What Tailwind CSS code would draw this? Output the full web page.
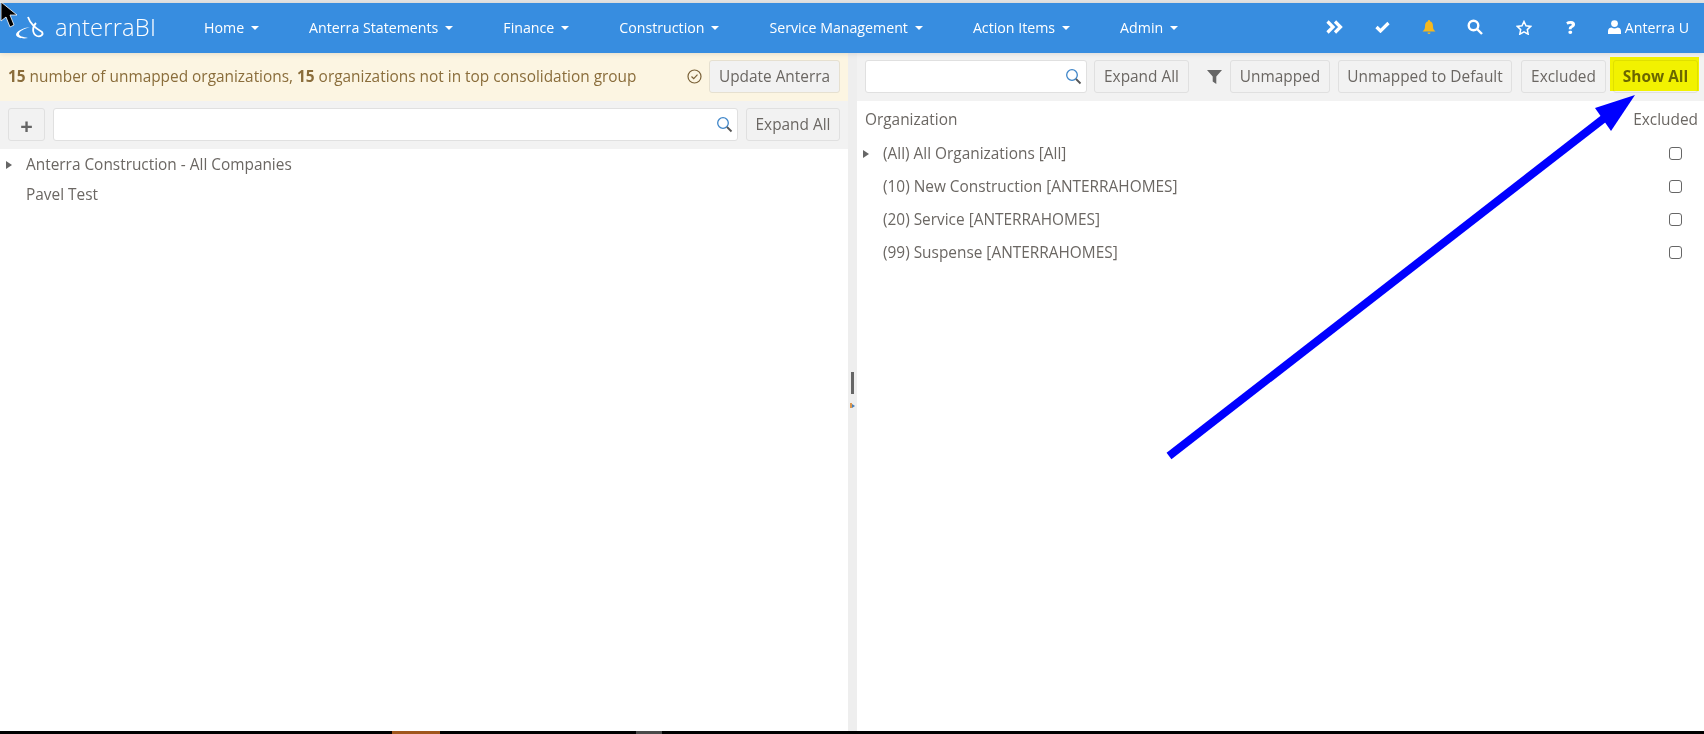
<!DOCTYPE html>
<html lang="en">
<head>
  <meta charset="UTF-8">
  <title>anterraBI</title>
  <script src="https://cdn.jsdelivr.net/npm/@tailwindcss/browser@4"></script>
</head>
<body class="relative w-[1704px] h-[734px] overflow-hidden bg-white font-['Open_Sans',sans-serif] text-[15.4px] text-[#6b6763]">

  <div class="flex flex-col h-full">
    <div class="h-[3px] bg-[#e3e3e3]"></div>

    <!-- Navbar -->
    <nav class="relative z-10 h-[50px] shrink-0 bg-[#378de0] flex items-center text-white pb-[1px] shadow-[0_1px_5px_rgba(0,0,0,0.1)]">
      <div class="w-[204px] shrink-0 flex items-center pl-[15px] gap-[8px]">
        <svg width="32" height="25" viewBox="0 0 32 25" fill="none" stroke="white" stroke-width="1.8">
          <path d="M15 12C8 13 1 16 1 20c1 3 7 4 12 3-5-1-9-2-9-4 0-3 5-5 11-7z" fill="white" stroke="none"/>
          <path d="M13 2c2 6 7 11 14 15 2 3-2 5-5 4-5-2-5-9-1-13"/>
        </svg>
        <span class="text-[23.7px] font-light leading-none tracking-[0.2px]">anterraBI</span>
      </div>
      <div class="flex items-center gap-[50px] text-[14.2px]">
        <span class="flex items-center gap-[7px]">Home <i class="w-0 h-0 mt-[2px] border-x-[4px] border-x-transparent border-t-[4px] border-t-white"></i></span>
        <span class="flex items-center gap-[7px]">Anterra Statements <i class="w-0 h-0 mt-[2px] border-x-[4px] border-x-transparent border-t-[4px] border-t-white"></i></span>
        <span class="flex items-center gap-[7px]">Finance <i class="w-0 h-0 mt-[2px] border-x-[4px] border-x-transparent border-t-[4px] border-t-white"></i></span>
        <span class="flex items-center gap-[7px]">Construction <i class="w-0 h-0 mt-[2px] border-x-[4px] border-x-transparent border-t-[4px] border-t-white"></i></span>
        <span class="flex items-center gap-[7px]">Service Management <i class="w-0 h-0 mt-[2px] border-x-[4px] border-x-transparent border-t-[4px] border-t-white"></i></span>
        <span class="flex items-center gap-[7px]">Action Items <i class="w-0 h-0 mt-[2px] border-x-[4px] border-x-transparent border-t-[4px] border-t-white"></i></span>
        <span class="flex items-center gap-[7px]">Admin <i class="w-0 h-0 mt-[2px] border-x-[4px] border-x-transparent border-t-[4px] border-t-white"></i></span>
      </div>
      <div class="ml-auto flex items-center pr-[15px]">
        <svg class="mr-[32px]" width="17" height="14" viewBox="0 0 17 14" fill="none" stroke="white" stroke-width="3.200"><path d="M1.500 1.500L7 7l-5.500 5.500M9 1.500L14.500 7 9 12.500"/></svg>
        <svg class="mr-[32px]" width="15" height="12" viewBox="0 0 15 12" fill="none" stroke="white" stroke-width="3.200"><path d="M1.500 6l4 4 8-8"/></svg>
        <svg class="mr-[31px]" width="14" height="15" viewBox="0 0 14 15" fill="#f5b81e"><path d="M7 0a1 1 0 0 1 1 1.200C10.500 2 11 4 11 6.500c0 2.500 1 3.500 2.500 5H.5C2 10 3 9 3 6.500 3 4 3.500 2 6 1.200A1 1 0 0 1 7 0zM5.500 12.500h3a1.500 1.500 0 0 1-3 0z"/></svg>
        <svg class="mr-[33px]" width="16" height="16" viewBox="0 0 16 16" fill="none" stroke="white" stroke-width="2.400"><circle cx="6.500" cy="6.500" r="4.800"/><path d="M10 10l5 5"/></svg>
        <svg class="mr-[34px]" width="16" height="15" viewBox="0 0 16 15" fill="none" stroke="white" stroke-width="1.500"><path d="M8 1.500l2 4.300 4.700.6-3.400 3.200.9 4.600L8 11.900l-4.200 2.300.9-4.600L1.300 6.400 6 5.800z"/></svg>
        <span class="mr-[32px] w-[10px] text-[18px] font-extrabold leading-none text-center">?</span>
        <svg class="mr-[4px]" width="13" height="14" viewBox="0 0 13 14" fill="white"><circle cx="6.500" cy="3.600" r="3.400"/><path d="M0 14v-3c0-2.500 2-3.500 3.500-3.500 2 1.300 4 1.300 6 0C11 7.500 13 8.500 13 11v3z"/></svg>
        <span class="text-[14.2px]">Anterra U</span>
      </div>
    </nav>

    <div class="flex flex-1 min-h-0">
      <!-- Left pane -->
      <section class="w-[848px] shrink-0 flex flex-col">
        <div class="h-[48px] shrink-0 bg-[#fcf5e2] flex items-center pl-[8px] pr-[8px] pb-[1px] text-[#8a6d3b]">
          <span><b class="font-bold">15</b> number of unmapped organizations, <b class="font-bold">15</b> organizations not in top consolidation group</span>
          <svg class="ml-auto mr-[7px]" width="15" height="15" viewBox="0 0 15 15" fill="none" stroke="#7a6138" stroke-width="1.200"><circle cx="7.500" cy="7.500" r="6.500"/><path d="M4.500 7.500l2.200 2.200 3.800-4"/></svg>
          <button class="w-[131px] h-[33px] rounded-[3px] border border-[#e6e0d0] bg-[#f2f2f2] text-[#6b6763]">Update Anterra</button>
        </div>
        <div class="h-[48px] shrink-0 bg-[#f2f2f2] flex items-center gap-[8px] pl-[8px] pr-[8px] pb-[1px]">
          <button class="w-[37px] h-[33px] rounded-[3px] border border-[#e0e0e0] bg-[#f2f2f2] text-[22px] font-bold leading-none text-[#666]">+</button>
          <div class="flex-1 h-[33px] rounded-[3px] border border-[#e0e0e0] bg-white flex items-center justify-end pr-[4px]">
            <svg width="17" height="17" viewBox="0 0 17 17" fill="none"><circle cx="7" cy="7" r="5.300" stroke="#3f86c9" stroke-width="1.300"/><path d="M11 11l4.500 4.500" stroke="#555" stroke-width="1.800"/></svg>
          </div>
          <button class="w-[94px] h-[33px] rounded-[3px] border border-[#e0e0e0] bg-[#f2f2f2]">Expand All</button>
        </div>
        <div class="pt-[1px]">
          <div class="h-[30px] flex items-center">
            <i class="ml-[6px] w-0 h-0 border-y-[4px] border-y-transparent border-l-[6px] border-l-[#666]"></i>
            <span class="ml-[14px]">Anterra Construction - All Companies</span>
          </div>
          <div class="h-[30px] flex items-center pl-[26px]">Pavel Test</div>
        </div>
      </section>

      <!-- Splitter -->
      <div class="w-[9px] shrink-0 bg-[#eeeeee] relative">
        <div class="absolute left-[3px] top-[319px] w-[3px] h-[22px] bg-[#666]"></div>
        <i class="absolute left-[2px] top-[350px] w-[2px] h-[5px] bg-[#d9964f]"></i>
        <i class="absolute left-[4px] top-[351px] w-0 h-0 border-y-[2px] border-y-transparent border-l-[3px] border-l-[#4a7fb5]"></i>
      </div>

      <!-- Right pane -->
      <section class="flex-1 flex flex-col min-w-0">
        <div class="h-[48px] shrink-0 bg-[#f2f2f2] flex items-center pl-[8px] pr-[6px] pb-[1px]">
          <div class="w-[222px] h-[33px] rounded-[3px] border border-[#e0e0e0] bg-white flex items-center justify-end pr-[4px]">
            <svg width="17" height="17" viewBox="0 0 17 17" fill="none"><circle cx="7" cy="7" r="5.300" stroke="#3f86c9" stroke-width="1.300"/><path d="M11 11l4.500 4.500" stroke="#555" stroke-width="1.800"/></svg>
          </div>
          <button class="ml-[7px] w-[95px] h-[33px] rounded-[3px] border border-[#e0e0e0] bg-[#f2f2f2]">Expand All</button>
          <svg class="ml-[18px]" width="15" height="15" viewBox="0 0 15 15" fill="#666"><path d="M0 1h15L9.300 7.500V15L5.700 12.500V7.500z"/></svg>
          <button class="ml-[8px] w-[100px] h-[33px] rounded-[3px] border border-[#e0e0e0] bg-[#f2f2f2]">Unmapped</button>
          <button class="ml-[8px] w-[174px] h-[33px] rounded-[3px] border border-[#e0e0e0] bg-[#f2f2f2]">Unmapped to Default</button>
          <button class="ml-[9px] w-[85px] h-[33px] rounded-[3px] border border-[#e0e0e0] bg-[#f2f2f2]">Excluded</button>
          <button class="ml-[7px] w-[85px] h-[33px] rounded-[3px] border border-[#e0e0e0] bg-[#f2f2f2] font-bold">Show All</button>
        </div>
        <div class="h-[36px] shrink-0 flex items-center justify-between pl-[8px] pr-[6px] pt-[2px]">
          <span>Organization</span>
          <span>Excluded</span>
        </div>
        <div>
          <div class="h-[33px] flex items-center pl-[6px] pr-[22px]">
            <i class="w-0 h-0 border-y-[4px] border-y-transparent border-l-[6px] border-l-[#666]"></i>
            <span class="ml-[14px]">(All) All Organizations [All]</span>
            <span class="ml-auto w-[13px] h-[13px] rounded-[3px] border border-[#666] bg-white"></span>
          </div>
          <div class="h-[33px] flex items-center pl-[26px] pr-[22px]">
            <span>(10) New Construction [ANTERRAHOMES]</span>
            <span class="ml-auto w-[13px] h-[13px] rounded-[3px] border border-[#666] bg-white"></span>
          </div>
          <div class="h-[33px] flex items-center pl-[26px] pr-[22px]">
            <span>(20) Service [ANTERRAHOMES]</span>
            <span class="ml-auto w-[13px] h-[13px] rounded-[3px] border border-[#666] bg-white"></span>
          </div>
          <div class="h-[33px] flex items-center pl-[26px] pr-[22px]">
            <span>(99) Suspense [ANTERRAHOMES]</span>
            <span class="ml-auto w-[13px] h-[13px] rounded-[3px] border border-[#666] bg-white"></span>
          </div>
        </div>
      </section>
    </div>

    <!-- Taskbar strip at the bottom edge -->
    <div class="h-[3px] shrink-0 bg-black flex">
      <div class="ml-[392px] w-[48px] bg-[#a0561c]"></div>
      <div class="ml-[196px] w-[26px] bg-[#4a4a4a]"></div>
    </div>
  </div>

  <!-- Highlight over Show All -->
  <div class="absolute z-20 left-[1610px] top-[57px] w-[89px] h-[34px] bg-[#ffff00] mix-blend-multiply"></div>

  <!-- Arrow annotation -->
  <svg class="absolute z-20 left-0 top-0 pointer-events-none" width="1704" height="734" viewBox="0 0 1704 734">
    <line x1="1169" y1="456" x2="1607" y2="116" stroke="#0000ff" stroke-width="8"/>
    <polygon points="1635,95 1595,108 1611,131" fill="#0000ff"/>
  </svg>

  <!-- Mouse cursor -->
  <svg class="absolute z-20 left-0 top-[1px]" width="18" height="30" viewBox="0 0 18 30">
    <path d="M1 1v19l5-4 4 10 4-2-4-10h7z" fill="#000" stroke="#fff" stroke-width="0.800"/>
  </svg>

</body>
</html>
